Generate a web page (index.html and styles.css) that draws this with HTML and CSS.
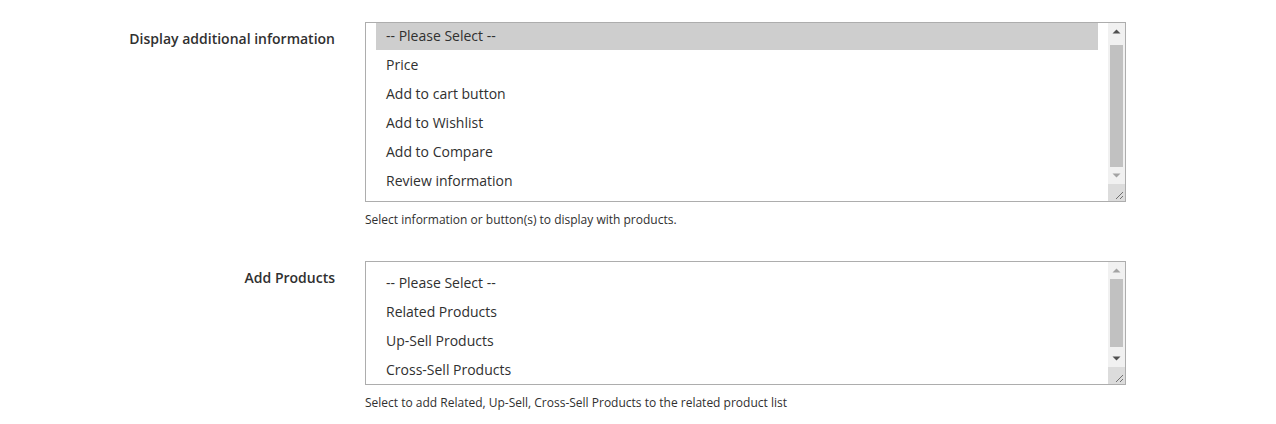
FILE: index.html
```html
<!DOCTYPE html>
<html lang="en">
<head>
    <meta charset="UTF-8">
    <title>Product list settings</title>
    <link rel="stylesheet" href="styles.css">
</head>
<body>
    <div class="fieldset">

        <div class="field">
            <label class="field-label">Display additional information</label>
            <div class="field-control">
                <div class="listbox listbox-tall">
                    <div class="options">
                        <div class="option selected">-- Please Select --</div>
                        <div class="option">Price</div>
                        <div class="option">Add to cart button</div>
                        <div class="option">Add to Wishlist</div>
                        <div class="option">Add to Compare</div>
                        <div class="option">Review information</div>
                    </div>
                    <div class="scrollbar">
                        <div class="arrow"><svg width="17" height="17" viewBox="0 0 17 17"><path d="M4.5 10.5h8l-4-4z" fill="#505050"/></svg></div>
                        <div class="track track-end">
                            <div class="thumb" style="height: 122px"></div>
                        </div>
                        <div class="arrow"><svg width="17" height="17" viewBox="0 0 17 17"><path d="M4.5 6.5h8l-4 4z" fill="#a3a3a3"/></svg></div>
                        <div class="corner"><svg width="17" height="17" viewBox="0 0 17 17"><path d="M15 8L8 15M15 12L12 15" stroke="#707070" stroke-width="1"/></svg></div>
                    </div>
                </div>
                <div class="note">Select information or button(s) to display with products.</div>
            </div>
        </div>

        <div class="field">
            <label class="field-label">Add Products</label>
            <div class="field-control">
                <div class="listbox listbox-short">
                    <div class="options options-top">
                        <div class="option">-- Please Select --</div>
                        <div class="option">Related Products</div>
                        <div class="option">Up-Sell Products</div>
                        <div class="option">Cross-Sell Products</div>
                    </div>
                    <div class="scrollbar">
                        <div class="arrow"><svg width="17" height="17" viewBox="0 0 17 17"><path d="M4.5 10.5h8l-4-4z" fill="#a3a3a3"/></svg></div>
                        <div class="track">
                            <div class="thumb" style="height: 68px"></div>
                        </div>
                        <div class="arrow"><svg width="17" height="17" viewBox="0 0 17 17"><path d="M4.5 6.5h8l-4 4z" fill="#505050"/></svg></div>
                        <div class="corner"><svg width="17" height="17" viewBox="0 0 17 17"><path d="M15 8L8 15M15 12L12 15" stroke="#707070" stroke-width="1"/></svg></div>
                    </div>
                </div>
                <div class="note">Select to add Related, Up-Sell, Cross-Sell Products to the related product list</div>
            </div>
        </div>

    </div>
</body>
</html>
```

FILE: styles.css
```css
body { margin: 0; background: #fff; font-family: "Open Sans", "Liberation Sans", sans-serif; color: #303030; }
.fieldset { padding-top: 22px; display: flex; flex-direction: column; gap: 33px; }
.field { display: grid; grid-template-columns: 335px 761px; column-gap: 30px; }
.field-label { text-align: right; font-size: 14px; font-weight: 600; line-height: 18px; padding-top: 8px; }
.listbox { display: flex; border: 1px solid #adadad; box-sizing: border-box; background: #fff; }
.listbox-tall { height: 180px; }
.listbox-short { height: 124px; }
.options { flex: 1; padding: 0 10px; overflow: hidden; }
.options-top { padding-top: 8px; }
.option { height: 27px; line-height: 25px; padding: 0 10px 2px; margin-bottom: 2px; box-sizing: border-box; font-size: 14px; white-space: nowrap; }
.option.selected { background: #cecece; }
.scrollbar { width: 17px; display: flex; flex-direction: column; background: #f1f1f1; }
.arrow { height: 17px; flex: none; }
.arrow svg, .corner svg { display: block; }
.track { flex: 1; display: flex; flex-direction: column; justify-content: flex-start; padding: 0 2px; }
.track-end { justify-content: flex-end; }
.thumb { background: #c1c1c1; flex: none; }
.corner { height: 17px; flex: none; background: #dcdcdc; }
.note { margin-top: 10px; font-size: 12px; line-height: 16px; }
```
